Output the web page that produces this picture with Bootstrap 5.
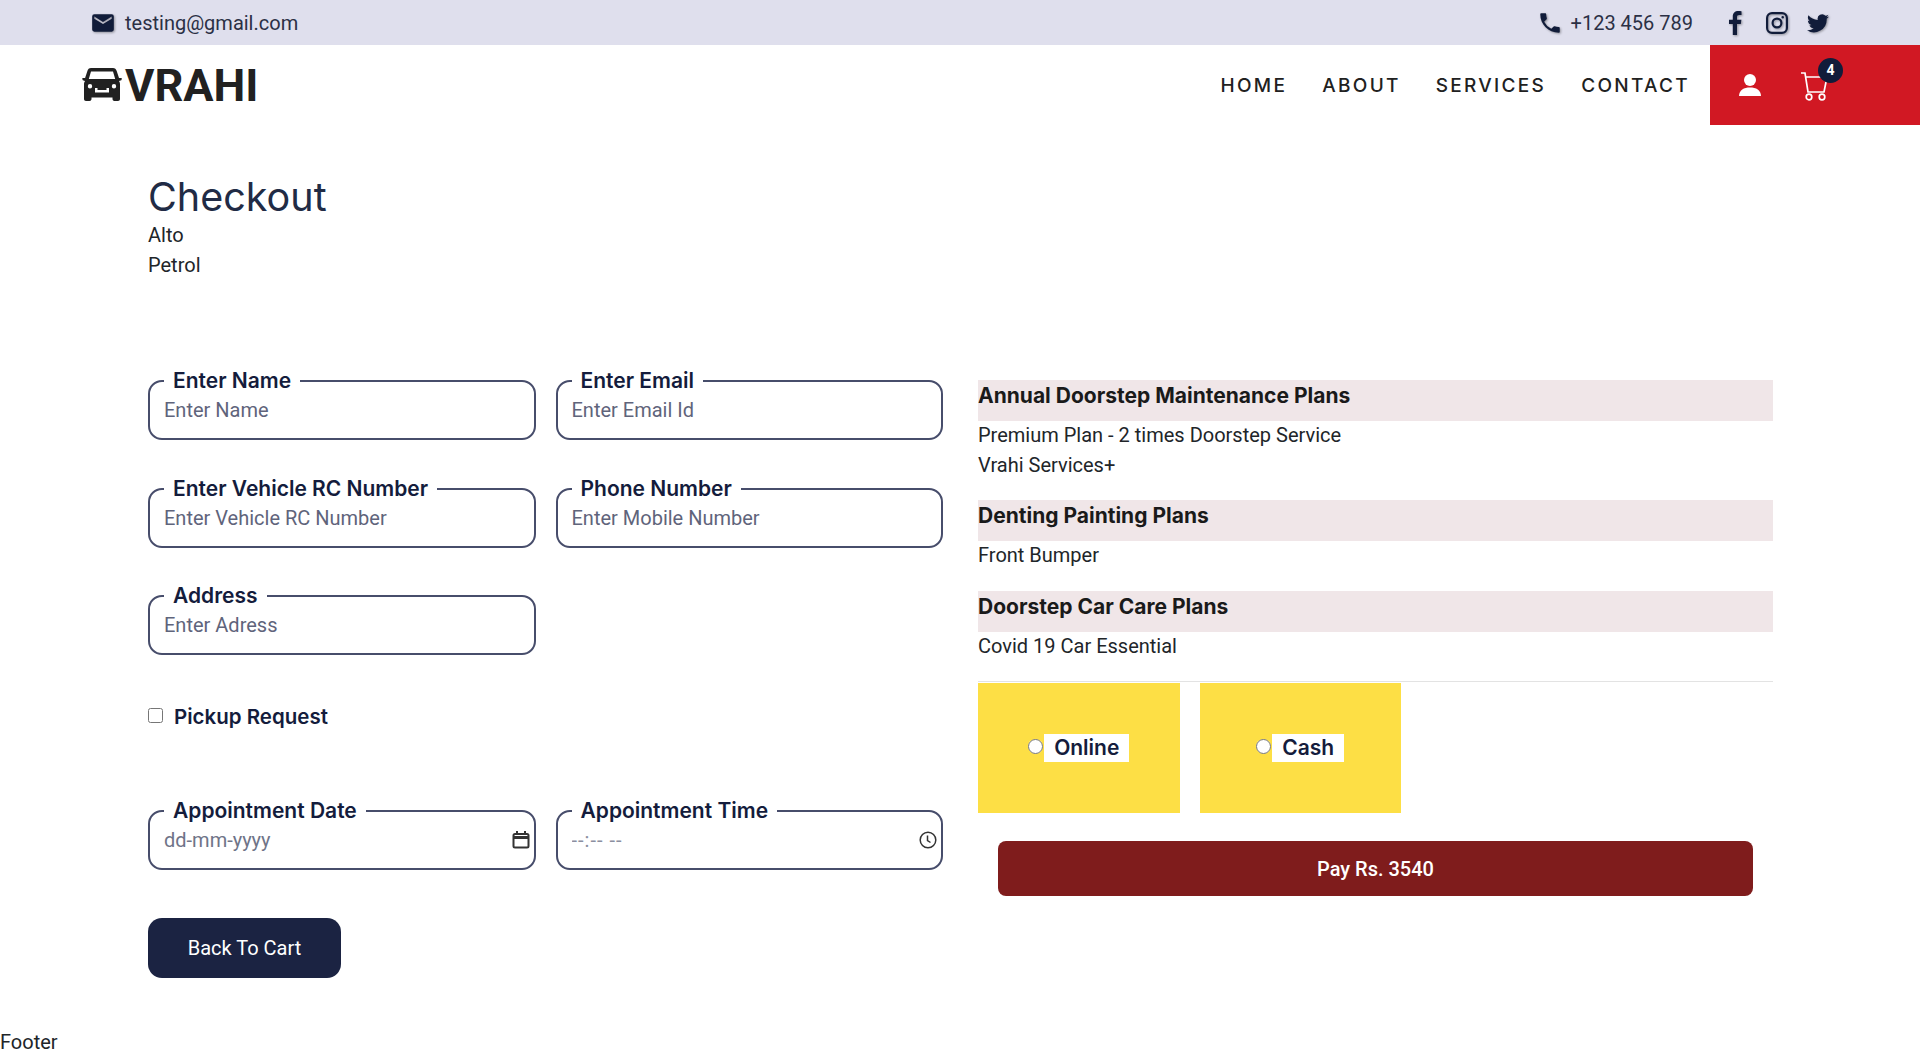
<!DOCTYPE html>
<html lang="en">
<head>
  <meta charset="UTF-8" />
  <title>Vrahi Checkout</title>
  <meta name="viewport" content="width=device-width, initial-scale=1" />
  <link href="https://cdn.jsdelivr.net/npm/bootstrap@5.3.0/dist/css/bootstrap.min.css" rel="stylesheet" />
  <style>
    body {
      font-family: Roboto, "Liberation Sans", sans-serif;
      font-size: 20px;
      color: #212529;
      background: #fff;
    }
    .head-font { font-family: Inter, "Noto Sans", sans-serif; }
    .top-strip {
      height: 45px;
      background: #dfdfed;
      padding: 0 90px;
      color: #2b3045;
    }
    .top-strip svg { fill: #111c3a; filter: drop-shadow(1px 1px 1px rgba(0,0,0,.35)); }
    .mail-text { margin-left: 9px; }
    .fb-icon { margin-left: 32px; }
    .ig-icon { margin-left: 20px; }
    .tw-icon { margin-left: 17px; }
    .main-bar { height: 80px; }
    .brand-logo { margin-left: 82px; font-size: 45px; font-weight: 700; line-height: 1; color: #212121; gap: 3px; }
    .menu-group { padding-top: 2px; }
    .menu-link {
      font-family: Inter, "Noto Sans", sans-serif;
      font-size: 19px;
      font-weight: 500;
      letter-spacing: 2.3px;
      color: #212121;
      text-decoration: none;
      margin-right: 35px;
    }
    .red-box { width: 210px; height: 80px; background: #d11823; margin-left: -15px; padding-left: 28px; }
    .cart-wrap { width: 40px; height: 40px; margin-left: 38px; }
    .cart-wrap svg { margin-top: 4px; }
    .cart-count {
      top: -7px;
      left: 18px;
      width: 25px;
      height: 25px;
      background: #111c3a;
      color: #fff;
      font-size: 14px;
      font-weight: 700;
    }
    .page-wrap { padding: 49px 147px 0 148px; }
    .page-title { font-size: 39.5px; font-weight: 400; color: #212b45; line-height: 46px; margin: 0; }
    .sub-line { line-height: 30px; }
    .form-side { width: 795px; margin-top: 89px; column-gap: 20px; }
    .legend-box {
      width: 387.5px;
      height: 71px;
      border: 2px solid #474d6b;
      border-radius: 14px;
      padding: 0 14px;
      margin: 0 0 36.5px;
      min-width: 0;
    }
    .legend-box legend {
      float: none;
      width: auto;
      margin: 0;
      padding: 0 9px;
      font-size: 21px;
      line-height: 24px;
      font-weight: 600;
      color: #141c3c;
    }
    .legend-box input {
      border: 0;
      outline: 0;
      padding: 0;
      width: 100%;
      height: 32px;
      margin-top: 1px;
      font-size: 20px;
      background: transparent;
    }
    .legend-box input::placeholder { color: #5f647b; opacity: 1; }
    .legend-box .date-hint::placeholder { color: #6f7488; }
    .legend-box .time-hint { letter-spacing: 1px; }
    .legend-box .time-hint::placeholder { color: #8b8fa0; }
    .field-icon { flex-shrink: 0; margin-right: -10px; }
    .pickup-row { height: 107.5px; padding-top: 11px; gap: 11px; align-items: flex-start; }
    .pickup-row input { width: 15px; height: 15px; margin: 5px 0 0; }
    .pickup-row label { font-size: 20.5px; font-weight: 600; color: #141c3c; line-height: 26px; margin-top: 1px; }
    .back-btn {
      width: 193px;
      height: 60px;
      background: #1b2342;
      color: #fff;
      border: 0;
      border-radius: 14px;
      font-size: 20px;
      margin-top: 11px;
    }
    .plan-side { width: 795px; margin-left: 35px; margin-top: 88px; padding-top: 12px; }
    .plan-head {
      height: 41px;
      background: #f0e6e8;
      font-size: 21px;
      font-weight: 700;
      line-height: 31px;
      color: #1a1a1a;
    }
    .plan-items { padding-bottom: 20px; line-height: 29.5px; color: #212529; }
    .plan-rule { height: 1px; background: #e3e3e3; margin-bottom: 1px; }
    .pay-opts { gap: 20px; }
    .pay-tile {
      width: 201.5px;
      height: 130px;
      background: #fddf45;
      gap: 1px;
    }
    .pay-tile input { width: 15px; height: 15px; margin: 0 0 4px; }
    .pay-tile label {
      background: #fff;
      font-size: 21px;
      font-weight: 600;
      color: #141c3c;
      padding: 0 10px;
      line-height: 28px;
    }
    .pay-btn {
      display: block;
      width: 755px;
      height: 55px;
      margin: 28px 0 0 20px;
      background: #7f1c1c;
      color: #fff;
      border: 0;
      border-radius: 8px;
      font-size: 20px;
      font-weight: 500;
    }
    .foot-line { padding-top: 49px; line-height: 30px; }
  </style>
</head>
<body>
  <div class="top-strip d-flex align-items-center">
    <svg width="26" height="26" viewBox="0 0 24 24"><path d="M20 4H4a2 2 0 0 0-2 2v12a2 2 0 0 0 2 2h16a2 2 0 0 0 2-2V6a2 2 0 0 0-2-2zm0 4-8 5-8-5V6l8 5 8-5z"/></svg>
    <span class="mail-text">testing@gmail.com</span>
    <svg class="ms-auto" width="26" height="26" viewBox="0 0 24 24"><path d="M6.6 10.8a15 15 0 0 0 6.6 6.6l2.2-2.2c.3-.3.7-.4 1-.2 1.100.4 2.300.6 3.600.6.600 0 1 .4 1 1V20c0 .6-.4 1-1 1C10.600 21 3 13.400 3 4c0-.6.4-1 1-1h3.500c.6 0 1 .4 1 1 0 1.300.2 2.500.6 3.600.1.300 0 .7-.2 1z"/></svg>
    <span class="ms-2">+123 456 789</span>
    <svg class="fb-icon" width="20" height="26" viewBox="0 0 20 26"><path d="M12 25v-11h3.800l.6-4.300H12V7.200c0-1.200.4-2.100 2.200-2.100h2.300V1.300C16 1.200 14.700 1 13.300 1 10 1 7.800 3 7.800 6.600v3.100H4V14h3.800v11z"/></svg>
    <svg class="ig-icon" width="24" height="24" viewBox="0 0 24 24"><path fill-rule="evenodd" d="M7 1h10a6 6 0 0 1 6 6v10a6 6 0 0 1-6 6H7a6 6 0 0 1-6-6V7a6 6 0 0 1 6-6zm0 2.200A3.800 3.800 0 0 0 3.200 7v10A3.800 3.800 0 0 0 7 20.800h10a3.800 3.800 0 0 0 3.800-3.800V7A3.800 3.800 0 0 0 17 3.200zM12 6.500a5.500 5.500 0 1 1 0 11 5.500 5.500 0 0 1 0-11zm0 2.200a3.300 3.300 0 1 0 0 6.600 3.300 3.300 0 0 0 0-6.600zM17.700 5a1.300 1.300 0 1 1 0 2.600 1.300 1.300 0 0 1 0-2.600z"/></svg>
    <svg class="tw-icon" width="24" height="24" viewBox="0 0 24 24"><path d="M23 5.500c-.8.400-1.700.6-2.600.7.900-.6 1.600-1.400 2-2.500-.9.500-1.800.9-2.900 1.100A4.500 4.500 0 0 0 11.800 9C8 8.800 4.700 7 2.500 4.200c-1.200 2.100-.6 4.700 1.400 6-.7 0-1.400-.2-2-.6 0 2.200 1.500 4 3.600 4.500-.7.200-1.400.2-2 .1.600 1.800 2.200 3.100 4.200 3.100A9 9 0 0 1 1 19.200 12.800 12.800 0 0 0 20.700 7.800c.9-.6 1.700-1.400 2.300-2.300z"/></svg>
  </div>

  <div class="main-bar d-flex align-items-center">
    <a class="brand-logo d-flex align-items-center text-decoration-none">
      <svg width="40" height="36" viewBox="0 0 40 36" fill="#212121"><path fill-rule="evenodd" d="M9 1h22c2 0 3 1 3.700 3l2.300 7h2c.6 0 1 .5.800 1l-.5 1.300-2.300.7c.7 1 1 2 1 3v15c0 1.200-.8 2-2 2h-3.500c-1.200 0-2-.8-2-2v-1.500H9.500V32c0 1.200-.8 2-2 2H4c-1.200 0-2-.8-2-2V17c0-1 .3-2 1-3L.8 13.300.3 12c-.2-.5.2-1 .8-1h2l2.300-7C6 2 7 1 9 1zm0 3.500L6.800 12h26.400L31 4.500zM8 17a2.200 2.200 0 1 0 0 4.400A2.200 2.200 0 0 0 8 17zm24 0a2.200 2.200 0 1 0 0 4.400 2.200 2.200 0 0 0 0-4.400zM13 21v4.500h14V21h-2.500v2h-9v-2z"/></svg>
      <span>VRAHI</span>
    </a>
    <div class="menu-group ms-auto d-flex align-items-center">
      <a class="menu-link" href="#">HOME</a>
      <a class="menu-link" href="#">ABOUT</a>
      <a class="menu-link" href="#">SERVICES</a>
      <a class="menu-link" href="#">CONTACT</a>
    </div>
    <div class="red-box d-flex align-items-center">
      <svg width="24" height="24" viewBox="0 0 24 24" fill="#fff"><circle cx="12" cy="7" r="6"/><path d="M1 23c0-6 5-8.500 11-8.500S23 17 23 23z"/></svg>
      <div class="cart-wrap position-relative d-flex align-items-center">
        <svg width="30" height="30" viewBox="0 0 30 30" fill="none" stroke="#fff" stroke-width="1.700"><path d="M1 1h4l3 19h16l3-15H6"/><circle cx="9" cy="25" r="2.800"/><circle cx="22" cy="25" r="2.800"/></svg>
        <span class="cart-count position-absolute rounded-circle d-flex align-items-center justify-content-center">4</span>
      </div>
    </div>
  </div>

  <div class="page-wrap">
    <h1 class="page-title head-font">Checkout</h1>
    <div class="sub-line">Alto</div>
    <div class="sub-line">Petrol</div>

    <div class="d-flex align-items-start">
      <form class="form-side d-flex flex-wrap">
        <fieldset class="legend-box">
          <legend class="head-font">Enter Name</legend>
          <input type="text" placeholder="Enter Name" />
        </fieldset>
        <fieldset class="legend-box">
          <legend class="head-font">Enter Email</legend>
          <input type="text" placeholder="Enter Email Id" />
        </fieldset>
        <fieldset class="legend-box">
          <legend class="head-font">Enter Vehicle RC Number</legend>
          <input type="text" placeholder="Enter Vehicle RC Number" />
        </fieldset>
        <fieldset class="legend-box">
          <legend class="head-font">Phone Number</legend>
          <input type="text" placeholder="Enter Mobile Number" />
        </fieldset>
        <fieldset class="legend-box">
          <legend class="head-font">Address</legend>
          <input type="text" placeholder="Enter Adress" />
        </fieldset>
        <div class="w-100 pickup-row d-flex">
          <input type="checkbox" id="pickup" />
          <label class="head-font" for="pickup">Pickup Request</label>
        </div>
        <fieldset class="legend-box">
          <legend class="head-font">Appointment Date</legend>
          <div class="d-flex align-items-center">
            <input class="date-hint" type="text" placeholder="dd-mm-yyyy" />
            <svg class="field-icon" width="18" height="18" viewBox="0 0 18 18" fill="none" stroke="#333" stroke-width="2"><rect x="1.500" y="3" width="15" height="13.500" rx="1.500"/><path d="M1.500 6.500h15" stroke-width="3"/><path d="M5 0v3M13 0v3"/></svg>
          </div>
        </fieldset>
        <fieldset class="legend-box">
          <legend class="head-font">Appointment Time</legend>
          <div class="d-flex align-items-center">
            <input class="time-hint" type="text" placeholder="--:-- --" />
            <svg class="field-icon" width="18" height="18" viewBox="0 0 18 18" fill="none" stroke="#333" stroke-width="1.500"><circle cx="9" cy="9" r="7.800"/><path d="M8.500 4.500V9.500l3 2"/></svg>
          </div>
        </fieldset>
        <button type="button" class="back-btn">Back To Cart</button>
      </form>

      <div class="plan-side">
        <div class="plan-head head-font">Annual Doorstep Maintenance Plans</div>
        <div class="plan-items"><div>Premium Plan - 2 times Doorstep Service</div><div>Vrahi Services+</div></div>
        <div class="plan-head head-font">Denting Painting Plans</div>
        <div class="plan-items"><div>Front Bumper</div></div>
        <div class="plan-head head-font">Doorstep Car Care Plans</div>
        <div class="plan-items"><div>Covid 19 Car Essential</div></div>
        <div class="plan-rule"></div>
        <div class="pay-opts d-flex">
          <div class="pay-tile d-flex align-items-center justify-content-center">
            <input type="radio" name="pay" id="online" />
            <label class="head-font" for="online">Online</label>
          </div>
          <div class="pay-tile d-flex align-items-center justify-content-center">
            <input type="radio" name="pay" id="cash" />
            <label class="head-font" for="cash">Cash</label>
          </div>
        </div>
        <button type="button" class="pay-btn">Pay Rs. 3540</button>
      </div>
    </div>
  </div>
  <div class="foot-line">Footer</div>
  <script src="https://cdn.jsdelivr.net/npm/bootstrap@5.3.0/dist/js/bootstrap.bundle.min.js"></script>
</body>
</html>
